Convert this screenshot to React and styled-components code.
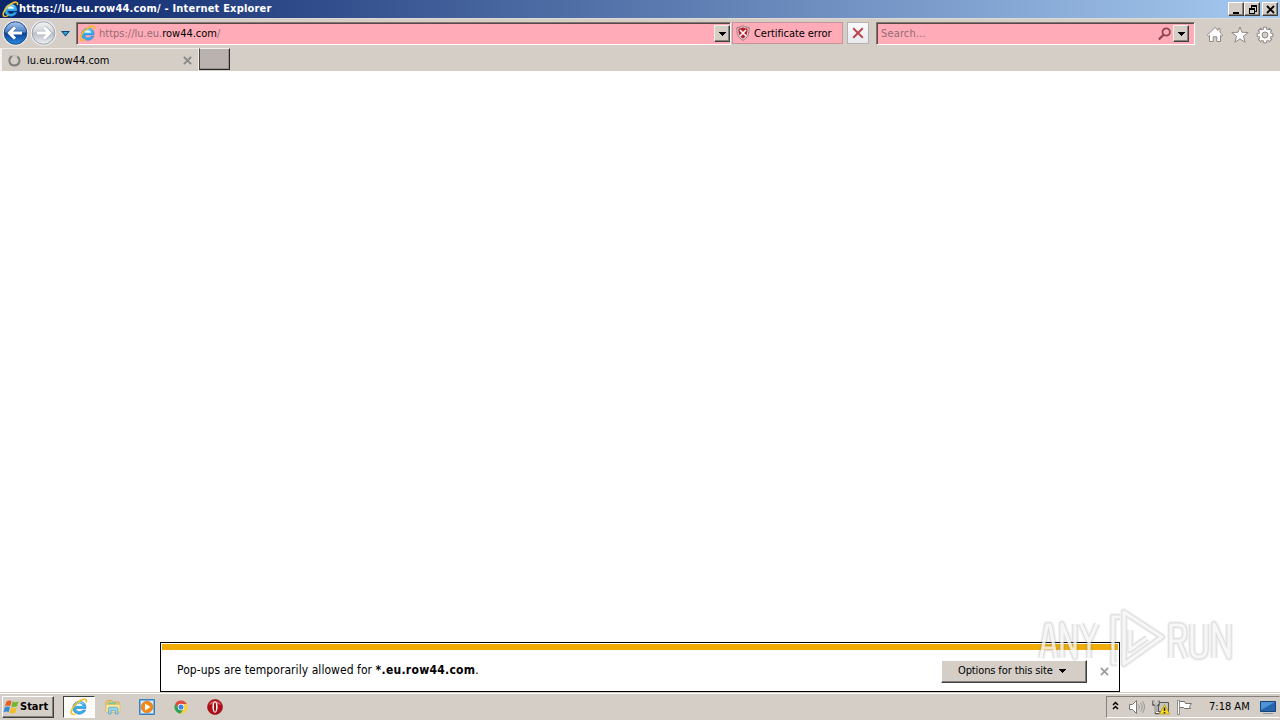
import styled, { createGlobalStyle } from 'styled-components';

const FACE = '#d4cec7'
const PINK = '#ffacb8'
const UI_FONT = '"DejaVu Sans Condensed", "DejaVu Sans", sans-serif'

const GlobalStyle = createGlobalStyle`
  * {
    box-sizing: border-box;
  }
  body {
    margin: 0;
    overflow: hidden;
    background: #fff;
    font-family: ${UI_FONT};
    font-size: 11px;
    color: #000;
  }
  svg {
    display: block;
    flex: none;
  }
`

const Screen = styled.div`
  position: relative;
  display: flex;
  flex-direction: column;
  width: 1280px;
  height: 720px;
`;

const Label = styled.span`
  flex: none;
  white-space: pre;
  line-height: 14px;
  margin-left: ${({ $indent }) => $indent || 0}px;
  font-size: ${({ $size }) => $size || 11}px;
  font-weight: ${({ $bold }) => ($bold ? 'bold' : 'normal')};
  letter-spacing: ${({ $track }) => $track || 0}px;
  color: ${({ $color }) => $color || 'inherit'};
`;

const TitleBar = styled.header`
  flex: none;
  display: flex;
  align-items: center;
  height: 18px;
  padding: 0 2px 0 2px;
  background: linear-gradient(90deg, #0a246a, #a6caf0);
  color: #fff;
`;

const WindowButtons = styled.div`
  display: flex;
  margin-left: auto;
`;

const WindowButton = styled.button`
  width: 16px;
  height: 14px;
  margin-left: ${({ $gap }) => $gap || 0}px;
  padding: 0 0 0 1px;
  border: 1px solid;
  border-color: #fff #404040 #404040 #fff;
  box-shadow: inset -1px -1px #87837c;
  background: ${FACE};
`;

const NavBar = styled.nav`
  flex: none;
  display: flex;
  align-items: flex-start;
  height: 30px;
  padding: 4px 6px 0 2px;
  border-top: 1px solid #dedbd6;
  background: ${FACE};
`;

const History = styled.div`
  display: flex;
  align-items: center;
  width: 74px;
  height: 26px;
  margin-top: -3px;

  svg:last-child {
    margin: 2px 0 0 3px;
  }
`;

const Field = styled.div`
  display: flex;
  align-items: center;
  width: ${({ $width }) => $width}px;
  height: 23px;
  margin-top: -1px;
  padding: 0 ${({ $end }) => $end || 0}px 0 2px;
  border: 1px solid;
  border-color: #807a75 #fff #fff #807a75;
  box-shadow: inset 1px 1px #5b4547;
  background: ${PINK};
`;

const DropButton = styled.button`
  flex: none;
  display: flex;
  align-items: center;
  justify-content: center;
  width: 16px;
  height: 17px;
  margin-left: ${({ $push }) => ($push ? 'auto' : '1px')};
  padding: 0;
  border: 1px solid;
  border-color: #f2efeb #404040 #404040 #f2efeb;
  box-shadow: inset -1px -1px #85817b;
  background: ${FACE};
`;

const Certificate = styled.div`
  display: flex;
  align-items: center;
  gap: 4px;
  width: 111px;
  height: 22px;
  margin-left: 1px;
  margin-top: -1px;
  padding-left: 3px;
  border: 1px solid #c2959a;
  background: ${PINK};

  span {
    padding-top: 2px;
  }
`;

const StopButton = styled.button`
  display: flex;
  align-items: center;
  justify-content: center;
  width: 22px;
  height: 22px;
  margin: -1px 7px 0 4px;
  padding: 0;
  border: 1px solid #b5b1ae;
  background: linear-gradient(#fafafa, #e7e9ed);
`;

const Tools = styled.div`
  display: flex;
  gap: 7px;
  margin: 3px 0 0 auto;
`;

const TabStrip = styled.div`
  flex: none;
  display: flex;
  height: 23px;
  background: ${FACE};
`;

const Tab = styled.div`
  display: flex;
  align-items: center;
  width: 199px;
  padding: 1px 6px 0 6px;
  border-top: 1px solid #eeebe8;
  border-left: 2px solid #f5f3f1;
  border-right: 1px solid #f1eeeb;
`;

const NewTab = styled.button`
  width: 31px;
  height: 22px;
  border: 1px solid;
  border-color: #f4f2ef #262626 #262626 #454545;
  box-shadow: inset -1px -1px #98928d;
  background: #b9b2ae;
`;

const Push = styled.div`
  margin-left: auto;
`;

const Page = styled.main`
  flex: 1;
  display: flex;
  flex-direction: column;
  align-items: center;
  justify-content: flex-end;
  background: #fff;
`;

const Notice = styled.section`
  width: 960px;
  height: 50px;
  padding: 1px;
  border: 1px solid #000;
  background: #fff;
`;

const NoticeStripe = styled.div`
  height: 6px;
  background: #f2ad05;
`;

const NoticeBody = styled.div`
  display: flex;
  align-items: center;
  height: 40px;
  padding: 0 9px 0 15px;

  > svg {
    margin-top: 2px;
  }
`;

const OptionsButton = styled.button`
  display: flex;
  align-items: center;
  gap: 6px;
  width: 146px;
  height: 23px;
  margin: 2px 13px 0 auto;
  padding: 0 0 0 16px;
  border: 1px solid;
  border-color: #fff #404040 #404040 #fff;
  box-shadow: inset -1px -1px #827d78;
  background: ${FACE};
  font-family: ${UI_FONT};
  color: #000;
`;

const TaskBar = styled.footer`
  flex: none;
  display: flex;
  align-items: center;
  height: 28px;
  padding: 1px 0 0 2px;
  border-top: 1px solid ${FACE};
  box-shadow: inset 0 1px #fff;
  background: ${FACE};
`;

const StartButton = styled.button`
  display: flex;
  align-items: center;
  width: 52px;
  height: 22px;
  margin-right: 9px;
  padding: 0;
  border: 1px solid;
  border-color: #fff #404040 #404040 #fff;
  box-shadow: inset -1px -1px #858079;
  background: ${FACE};
  font-family: ${UI_FONT};
  color: #000;
`;

const TaskButton = styled.div`
  display: flex;
  align-items: center;
  justify-content: center;
  width: ${({ $active }) => ($active ? 32 : 34)}px;
  height: 22px;
  ${({ $active }) => $active && `
    margin-right: 1px;
    border: 1px solid;
    border-color: #404040 #fff #fff #404040;
    background: #fcfbfa;
  `}
`;

const Tray = styled.div`
  display: flex;
  align-items: center;
  width: 174px;
  height: 22px;
  margin-left: auto;
  padding-left: 5px;
  border: 1px solid;
  border-color: #858079 transparent #fff #858079;
`;

const Clock = styled.time`
  width: 51px;
  margin-left: 13px;
`;

const Watermark = styled.svg`
  position: absolute;
  left: 1030px;
  top: 604px;
  pointer-events: none;
`;

function IeLogo({ size = 17 }) {
  return (
    <svg width={size} height={size} viewBox="0 0 16 16" fill="none">
      <path d="M14.200 9.300H5.200c.2 3.300 4.800 3.700 6.200 1.400h2.500c-1.900 5.600-11.700 4.700-11.400-2.200C2.800 1.200 14.600.6 14.200 9.300Z" fill="#36aef0" stroke="#1c79c6" strokeWidth=".5" />
      <path d="M5.200 7.200h6.100c-.4-3-5.500-3-6.100 0Z" fill="#eef9ff" />
      <path d="M4.400 5.700c1.800-2.300 5.600-2.800 7.600-.5" stroke="#8bd8ff" />
      <path d="M2.300 14.600C-.9 13.400 2.700 6.500 8 3.100 12.400.2 15.700.4 14.300 4" stroke="#f3be26" strokeWidth="1.500" />
      <path d="M2 14.300c1.300.7 3.100-.2 4-.9" stroke="#f3be26" />
    </svg>
  )
}

function NavArrow({ forward }) {
  const id = forward ? 'forward-fill' : 'back-fill'
  return (
    <svg width={forward ? 29 : 27} height="26" viewBox="0 0 27 26" fill="none">
      <defs>
        <linearGradient id={id} x2="0" y2="1">
          <stop stopColor={forward ? '#f3f4f5' : '#a7c8ee'} />
          <stop offset=".46" stopColor={forward ? '#cfd4da' : '#4c80c9'} />
          <stop offset=".5" stopColor={forward ? '#b7bfc8' : '#0c4197'} />
          <stop offset="1" stopColor={forward ? '#edf0f2' : '#258be0'} />
        </linearGradient>
      </defs>
      <circle cx="13.5" cy="13" r="12.8" fill="#eef0f3" />
      <circle cx="13.5" cy="13" r="11.300" fill={`url(#${id})`} stroke={forward ? '#9a9fa6' : '#24477c'} />
      <g transform={forward ? 'translate(27 0) scale(-1 1)' : undefined}>
        <path d="m13 7-6 6 6 6M7.500 13H20" stroke={forward ? '#98a0aa' : '#164583'} strokeWidth="4.500" opacity=".55" />
        <path d="m13 7.400-5.600 5.600 5.600 5.600M7.800 13H20" stroke="#fff" strokeWidth="3" />
      </g>
    </svg>
  )
}

function Caret({ blue }) {
  if (blue) {
    return (
      <svg width="9" height="6" viewBox="0 0 9 6">
        <path d="M0 0h9L4.500 5.500Z" fill="#0a477e" />
        <path d="M2 1h5L4.500 4Z" fill="#3ca6dc" />
      </svg>
    )
  }
  return (
    <svg width="7" height="4" viewBox="0 0 7 4" shapeRendering="crispEdges">
      <path d="M0 0h7v1H0ZM1 1h5v1H1ZM2 2h3v1H2ZM3 3h1v1H3Z" />
    </svg>
  )
}

function Cross({ size = 9, color = '#8a8784', width = 2 }) {
  return (
    <svg width={size} height={size} viewBox="0 0 10 10">
      <path d="m1 1 8 8m0-8L1 9" stroke={color} strokeWidth={width} />
    </svg>
  )
}

function WindowGlyph({ kind }) {
  return (
    <svg width="13" height="11" viewBox="0 0 13 11" fill="none" stroke="#000" shapeRendering="crispEdges">
      {kind === 'min' && <path d="M3 9h6" strokeWidth="2" />}
      {kind === 'restore' && (
        <>
          <path d="M5 2h6M3 5h6" strokeWidth="2" />
          <path d="M5.500 2v2M10.500 2v5.500H9M3.500 5v4.500h5V5" />
        </>
      )}
      {kind === 'close' && <path d="m3 2 7 7m0-7L3 9" strokeWidth="1.800" shapeRendering="auto" />}
    </svg>
  )
}

function ShieldError() {
  return (
    <svg width="14" height="16" viewBox="0 0 14 16">
      <path d="M7 .7c2 1.400 4 1.800 6 1.800.4 6-1 10-6 12.800C2 12.500.6 8.500 1 2.500 3 2.500 5 2.100 7 .7Z" fill="#f2dedd" stroke="#8b7174" />
      <path d="M7 2.300c1.500.9 3 1.200 4.600 1.300.1 5-.9 8-4.600 10.100C3.300 11.600 2.300 8.600 2.400 3.600 4 3.500 5.500 3.200 7 2.300Z" fill="#ba202d" />
      <path d="m4 5 6 6m0-6-6 6" stroke="#fff" strokeWidth="1.700" />
    </svg>
  )
}

function SearchGlyph() {
  return (
    <svg width="14" height="14" viewBox="0 0 14 14" fill="none" stroke="#8b4550">
      <circle cx="8.200" cy="5" r="3.700" strokeWidth="1.800" />
      <path d="M5.500 7.800.9 12.500" strokeWidth="2.300" />
    </svg>
  )
}

function ToolIcon({ kind }) {
  return (
    <svg width="18" height="18" viewBox="0 0 18 18" fill="#fff" stroke="#8d8883" strokeLinejoin="round">
      {kind === 'home' && <path d="M9 1.500 12 4.400V2.600h2v3.800L16.700 9l-1.200 1.200-1-.9v6.200h-3.700v-4.700H7.200v4.700H3.500V9.300l-1 .9L1.300 9Z" />}
      {kind === 'star' && <path d="m9 1 2 5.300 6.200.2-4.800 3.700 1.700 6L9 12.900l-5.100 3.300 1.700-6L.8 6.500 7 6.300Z" />}
      {kind === 'gear' && (
        <>
          {[0, 45, 90, 135, 180, 225, 270, 315].map((a) => (
            <path key={a} d="M7.300 4V1.200h3.400V4" transform={`rotate(${a} 9 9)`} />
          ))}
          <circle cx="9" cy="9" r="5.600" stroke="none" />
          <circle cx="9" cy="9" r="3" fill={FACE} />
        </>
      )}
    </svg>
  )
}

function Spinner() {
  return (
    <svg width="13" height="13" viewBox="0 0 13 13" fill="none">
      <circle cx="6.500" cy="6.500" r="5" stroke="#c2beb9" strokeWidth="1.700" />
      <path d="M4 2.200C-.2 4.700.8 11.500 6.500 11.500c5 0 6.500-6 2.800-8.900" stroke="#807e7b" strokeWidth="2" />
    </svg>
  )
}

function WindowsFlag() {
  return (
    <svg width="17" height="16" viewBox="0 0 17 16">
      <path d="M3.500 2.500C5.500 1 7 1.200 8.500 2L7.300 7C5.500 6.200 4 6.200 2 7.400Z" fill="#ec5b23" />
      <path d="M9.500 2.600c2 1 3.700.8 6-.4L14 7.300c-2 1-3.700 1-5.600.2Z" fill="#75b82c" />
      <path d="M1.800 8.400C3.500 7.300 5.200 7.200 7 8l-1.300 5c-1.700-.9-3.300-.8-5.200.3Z" fill="#328bd3" />
      <path d="M8 8.600c2 .9 3.600.9 5.700-.2l-1.500 5.300c-2 1-3.500.9-5.500 0Z" fill="#f6bd20" />
    </svg>
  )
}

function FolderIcon() {
  return (
    <svg width="16" height="16" viewBox="0 0 16 16">
      <path d="M1 3 2.500 1.500h4L8 3h6v10H1Z" fill="#e9c866" stroke="#c9a24c" strokeWidth=".7" />
      <path d="M3 3.500h8v3H3Z" fill="#7cc3a1" />
      <path d="M1 5.500h14V13H1Z" fill="#f8e69c" stroke="#dcbc64" strokeWidth=".6" />
      <path d="M3.500 15V9.800q0-1.500 1.500-1.500h6.500q1.500 0 1.500 1.500V15h-2.600v-3.700H6V15Z" fill="#9bd4ef" stroke="#4d9fc5" strokeWidth=".7" />
    </svg>
  )
}

function PlayerIcon() {
  return (
    <svg width="16" height="16" viewBox="0 0 16 16">
      <path d="M.5.500h15v15H.5Z" fill="#78b6e9" stroke="#3d7fbd" />
      <path d="M2 2h12v12H2Z" fill="#d9edfb" />
      <circle cx="8" cy="8" r="5.800" fill="#f58713" stroke="#dd6c08" strokeWidth=".6" />
      <path d="m6 4.500 5.500 3.500L6 11.500Z" fill="#fff" />
    </svg>
  )
}

function ChromeIcon() {
  return (
    <svg width="14" height="14" viewBox="0 0 16 16">
      <circle cx="8" cy="8" r="7.500" fill="#ffcd3c" />
      <path d="M1.500 4.300A7.500 7.500 0 0 1 14.600 4.500H8L4.900 9.800Z" fill="#df4b3e" />
      <path d="M1.500 4.300A7.500 7.500 0 0 0 7.500 15.500L11 9.800 8 11.500 4.900 9.800Z" fill="#26a25a" />
      <circle cx="8" cy="8" r="3.700" fill="#fff" />
      <circle cx="8" cy="8" r="2.900" fill="#4084e8" />
    </svg>
  )
}

function OperaIcon() {
  return (
    <svg width="16" height="16" viewBox="0 0 16 16">
      <circle cx="8" cy="8" r="7.500" fill="#b40c17" stroke="#850d13" strokeWidth=".6" />
      <path d="M2 6a6.500 6.500 0 0 1 12 0Q8 3 2 6Z" fill="#dc5960" />
      <ellipse cx="8" cy="8" rx="2.600" ry="5.800" fill="#fff" />
      <ellipse cx="8" cy="8" rx="1.100" ry="4.700" fill="#970d14" />
    </svg>
  )
}

function TrayIcons() {
  return (
    <svg width="84" height="20" viewBox="0 0 84 20" fill="none">
      <path d="m1 8 2.500-2.500L6 8M1 12l2.500-2.500L6 12" stroke="#000" strokeWidth="1.500" />
      <path d="M17.500 7.500h3l4-4v13l-4-4h-3Z" fill="#fff" stroke="#777" />
      <path d="M26.500 7.500q2 2.500 0 5M28.500 5.500q3.500 4.500 0 9M30.500 4q4 6 0 12" stroke="#9b9893" />
      <path d="M46.500 5.500h10v9h-10Z" fill="#c6c6be" stroke="#555" />
      <path d="M41.500 3.500v4h5v-4m-2.500 4v8.500h3.500" stroke="#555" strokeWidth="2.500" />
      <path d="M42 3.500v3.500h4V3.500m-2 4v8h3" stroke="#fff" />
      <path d="m52.500 7.500 5 9.500h-10Z" fill="#ffda22" stroke="#b39312" strokeWidth=".7" />
      <path d="M52.500 10.500v3.500m0 1v1.500" stroke="#222" strokeWidth="1.500" />
      <path d="M66.500 4.500h6l1 2h6l-2 3 1 2h-6l-1-1h-5Z" fill="#fff" stroke="#737373" />
      <path d="M65.500 3.500h2v14h-2Z" fill="#fff" stroke="#777" strokeWidth=".8" />
    </svg>
  )
}

function ShowDesktop() {
  return (
    <svg width="16" height="16" viewBox="0 0 16 16">
      <path d="M.5 2.500h15v10H.5Z" fill="#2565ae" stroke="#174475" />
      <path d="M1 3h14L1 11Z" fill="#4f92d5" />
      <path d="M3 14.500h10" stroke="#8d9eab" />
    </svg>
  )
}

function AnyRunMark() {
  const shapes = (
    <>
      <path d="m11 54 6-33h3l6 33M14 44h9M32 54V20l13 33V20M51 20l8 18 8-18M59 38v16" />
      <path d="M90 13h-7v46h4M94 8l38 25-38 27ZM100 26v20l17-12" />
      <path d="M141 54V21h8q6 0 6 8t-6 8h-8m8 0 7 17M162 20v25q0 8 7 8t7-8V20M184 54V20l15 33V20" />
    </>
  )
  return (
    <Watermark width="210" height="75" viewBox="0 0 210 75" fill="none" strokeLinejoin="round">
      <g stroke="#8c8c8c" strokeOpacity=".1" strokeWidth="8">{shapes}</g>
      <g stroke="#8c8c8c" strokeOpacity=".2" strokeWidth="5.500">{shapes}</g>
      <g stroke="#fff" strokeOpacity=".75" strokeWidth="3.200">{shapes}</g>
    </Watermark>
  )
}

export default function App() {
  return (
    <>
      <GlobalStyle />
      <Screen>
        <TitleBar>
          <IeLogo />
          <Label $bold $track={0.19}>https://lu.eu.row44.com/ - Internet Explorer</Label>
          <WindowButtons>
            <WindowButton><WindowGlyph kind="min" /></WindowButton>
            <WindowButton><WindowGlyph kind="restore" /></WindowButton>
            <WindowButton $gap={2}><WindowGlyph kind="close" /></WindowButton>
          </WindowButtons>
        </TitleBar>

        <NavBar>
          <History>
            <NavArrow />
            <NavArrow forward />
            <Caret blue />
          </History>
          <Field $width={655}>
            <IeLogo />
            <Label $indent={3} $color="#926d73">https://lu.eu.</Label>
            <Label>row44.com</Label>
            <Label $color="#926d73">/</Label>
            <DropButton $push><Caret /></DropButton>
          </Field>
          <Certificate>
            <ShieldError />
            <Label $track={-0.06}>Certificate error</Label>
          </Certificate>
          <StopButton><Cross size={12} color="#b94951" width={1.7} /></StopButton>
          <Field $width={319} $end={5}>
            <Label $indent={2} $track={0.15} $color="#926d73">Search...</Label>
            <Push><SearchGlyph /></Push>
            <DropButton><Caret /></DropButton>
          </Field>
          <Tools>
            <ToolIcon kind="home" />
            <ToolIcon kind="star" />
            <ToolIcon kind="gear" />
          </Tools>
        </NavBar>

        <TabStrip>
          <Tab>
            <Spinner />
            <Label $indent={6}>lu.eu.row44.com</Label>
            <Push><Cross /></Push>
          </Tab>
          <NewTab />
        </TabStrip>

        <Page>
          <Notice>
            <NoticeStripe />
            <NoticeBody>
              <Label $size={12} $track={0.06}>Pop-ups are temporarily allowed for </Label>
              <Label $size={12} $bold $track={0.28}>*.eu.row44.com</Label>
              <Label $size={12}>.</Label>
              <OptionsButton>
                <Label $track={-0.12}>Options for this site</Label>
                <Caret />
              </OptionsButton>
              <Cross color="#9c9c9c" />
            </NoticeBody>
          </Notice>
        </Page>

        <TaskBar>
          <StartButton>
            <WindowsFlag />
            <Label $bold>Start</Label>
          </StartButton>
          <TaskButton $active><IeLogo size={18} /></TaskButton>
          <TaskButton><FolderIcon /></TaskButton>
          <TaskButton><PlayerIcon /></TaskButton>
          <TaskButton><ChromeIcon /></TaskButton>
          <TaskButton><OperaIcon /></TaskButton>
          <Tray>
            <TrayIcons />
            <Clock><Label>7:18 AM</Label></Clock>
            <ShowDesktop />
          </Tray>
        </TaskBar>

        <AnyRunMark />
      </Screen>
    </>
  )
}
